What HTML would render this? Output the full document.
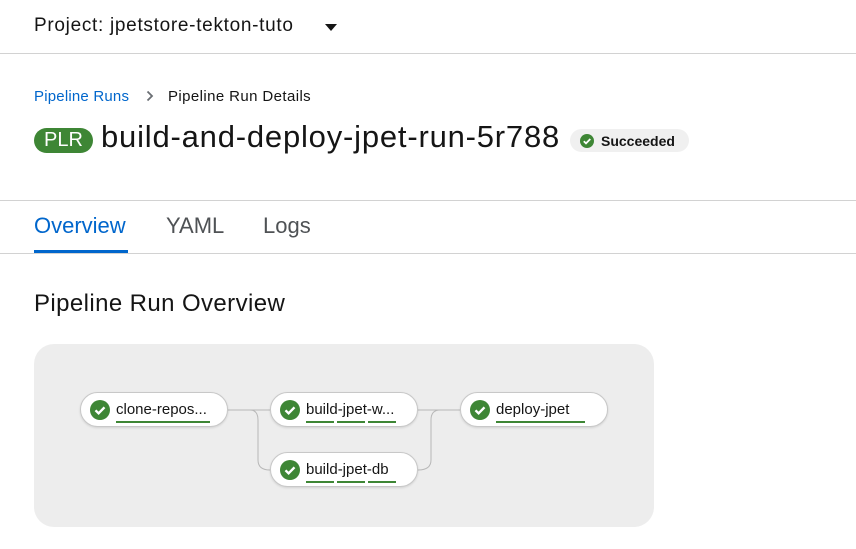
<!DOCTYPE html>
<html><head><style>
body{margin:0;width:856px;height:549px;background:#fff;font-family:"Liberation Sans",sans-serif;color:#151515;position:relative;overflow:hidden}
.a{position:absolute;white-space:nowrap}
.node{position:absolute;width:148px;height:35px;background:#fff;border:1px solid #c8c8c8;border-radius:18px;box-sizing:border-box;box-shadow:0 1px 2px rgba(0,0,0,.12)}
.node .ck{position:absolute;left:9px;top:7px}
.node .t{position:absolute;left:35px;top:8px;font-size:15px;color:#151515;white-space:nowrap}
.node .u{position:absolute;top:28px;height:2px;background:#3e8635}
</style></head><body>
<div class="a" style="left:34px;top:15px;font-size:19px;letter-spacing:0.7px">Project: jpetstore-tekton-tuto</div>
<svg class="a" style="left:325px;top:24px" width="12" height="8"><path d="M0 0H12L6 7Z" fill="#151515"/></svg>
<div class="a" style="left:0;top:53px;width:856px;height:1px;background:#d2d2d2"></div>
<div class="a" style="left:34px;top:88px;font-size:15px;letter-spacing:0.2px;color:#0066cc">Pipeline Runs</div>
<svg class="a" style="left:146px;top:90px" width="8" height="12"><path d="M1.5 1.5L6 6L1.5 10.5" stroke="#6a6e73" stroke-width="1.8" fill="none"/></svg>
<div class="a" style="left:168px;top:88px;font-size:15px;letter-spacing:0.4px">Pipeline Run Details</div>
<div class="a" style="left:34px;top:128px;width:59px;height:25px;border-radius:13px;background:#3e8635;color:#fff;font-size:20px;line-height:25px;text-align:center">PLR</div>
<div class="a" style="left:101px;top:119px;font-size:31px;letter-spacing:0.8px">build-and-deploy-jpet-run-5r788</div>
<div class="a" style="left:570px;top:129px;width:119px;height:23px;border-radius:12px;background:#f0f0f0"></div>
<svg class="a" style="left:580px;top:134px" width="14" height="14"><circle cx="7" cy="7" r="7" fill="#3e8635"/><path d="M3.8 7.2L6 9.4L10.3 5" stroke="#fff" stroke-width="1.8" fill="none"/></svg>
<div class="a" style="left:601px;top:133px;font-size:14px;font-weight:bold;color:#151515">Succeeded</div>
<div class="a" style="left:0;top:200px;width:856px;height:1px;background:#d2d2d2"></div>
<div class="a" style="left:34px;top:213px;font-size:22px;color:#0066cc">Overview</div>
<div class="a" style="left:166px;top:213px;font-size:22px;color:#4f5255">YAML</div>
<div class="a" style="left:263px;top:213px;font-size:22px;color:#4f5255">Logs</div>
<div class="a" style="left:0;top:253px;width:856px;height:1px;background:#d2d2d2"></div>
<div class="a" style="left:34px;top:250px;width:94px;height:3px;background:#0066cc"></div>
<div class="a" style="left:34px;top:290px;font-size:24px;letter-spacing:0.4px">Pipeline Run Overview</div>
<div class="a" style="left:34px;top:344px;width:620px;height:183px;border-radius:20px;background:#ededed"></div>
<svg class="a" style="left:0;top:0" width="856" height="549"><g stroke="#b8b8b8" stroke-width="1" fill="none">
<path d="M228 410H270"/><path d="M250 410Q258 410 258 420V460Q258 470 270 470"/>
<path d="M418 410H460"/><path d="M418 470Q431 470 431 460V420Q431 410 440 410"/></g></svg>
<div class="node" style="left:80px;top:392px"><svg class="ck" width="20" height="20"><circle cx="10" cy="10" r="10" fill="#3e8635"/><path d="M5.5 10.3L8.6 13.3L14.5 7.3" stroke="#fff" stroke-width="2.4" fill="none"/></svg><span class="t">clone-repos...</span><div class="u" style="left:35px;width:94px"></div></div>
<div class="node" style="left:270px;top:392px"><svg class="ck" width="20" height="20"><circle cx="10" cy="10" r="10" fill="#3e8635"/><path d="M5.5 10.3L8.6 13.3L14.5 7.3" stroke="#fff" stroke-width="2.4" fill="none"/></svg><span class="t">build-jpet-w...</span><div class="u" style="left:35px;width:28px"></div><div class="u" style="left:66px;width:28px"></div><div class="u" style="left:97px;width:28px"></div></div>
<div class="node" style="left:460px;top:392px"><svg class="ck" width="20" height="20"><circle cx="10" cy="10" r="10" fill="#3e8635"/><path d="M5.5 10.3L8.6 13.3L14.5 7.3" stroke="#fff" stroke-width="2.4" fill="none"/></svg><span class="t">deploy-jpet</span><div class="u" style="left:35px;width:89px"></div></div>
<div class="node" style="left:270px;top:452px"><svg class="ck" width="20" height="20"><circle cx="10" cy="10" r="10" fill="#3e8635"/><path d="M5.5 10.3L8.6 13.3L14.5 7.3" stroke="#fff" stroke-width="2.4" fill="none"/></svg><span class="t">build-jpet-db</span><div class="u" style="left:35px;width:28px"></div><div class="u" style="left:66px;width:28px"></div><div class="u" style="left:97px;width:28px"></div></div>
</body></html>
